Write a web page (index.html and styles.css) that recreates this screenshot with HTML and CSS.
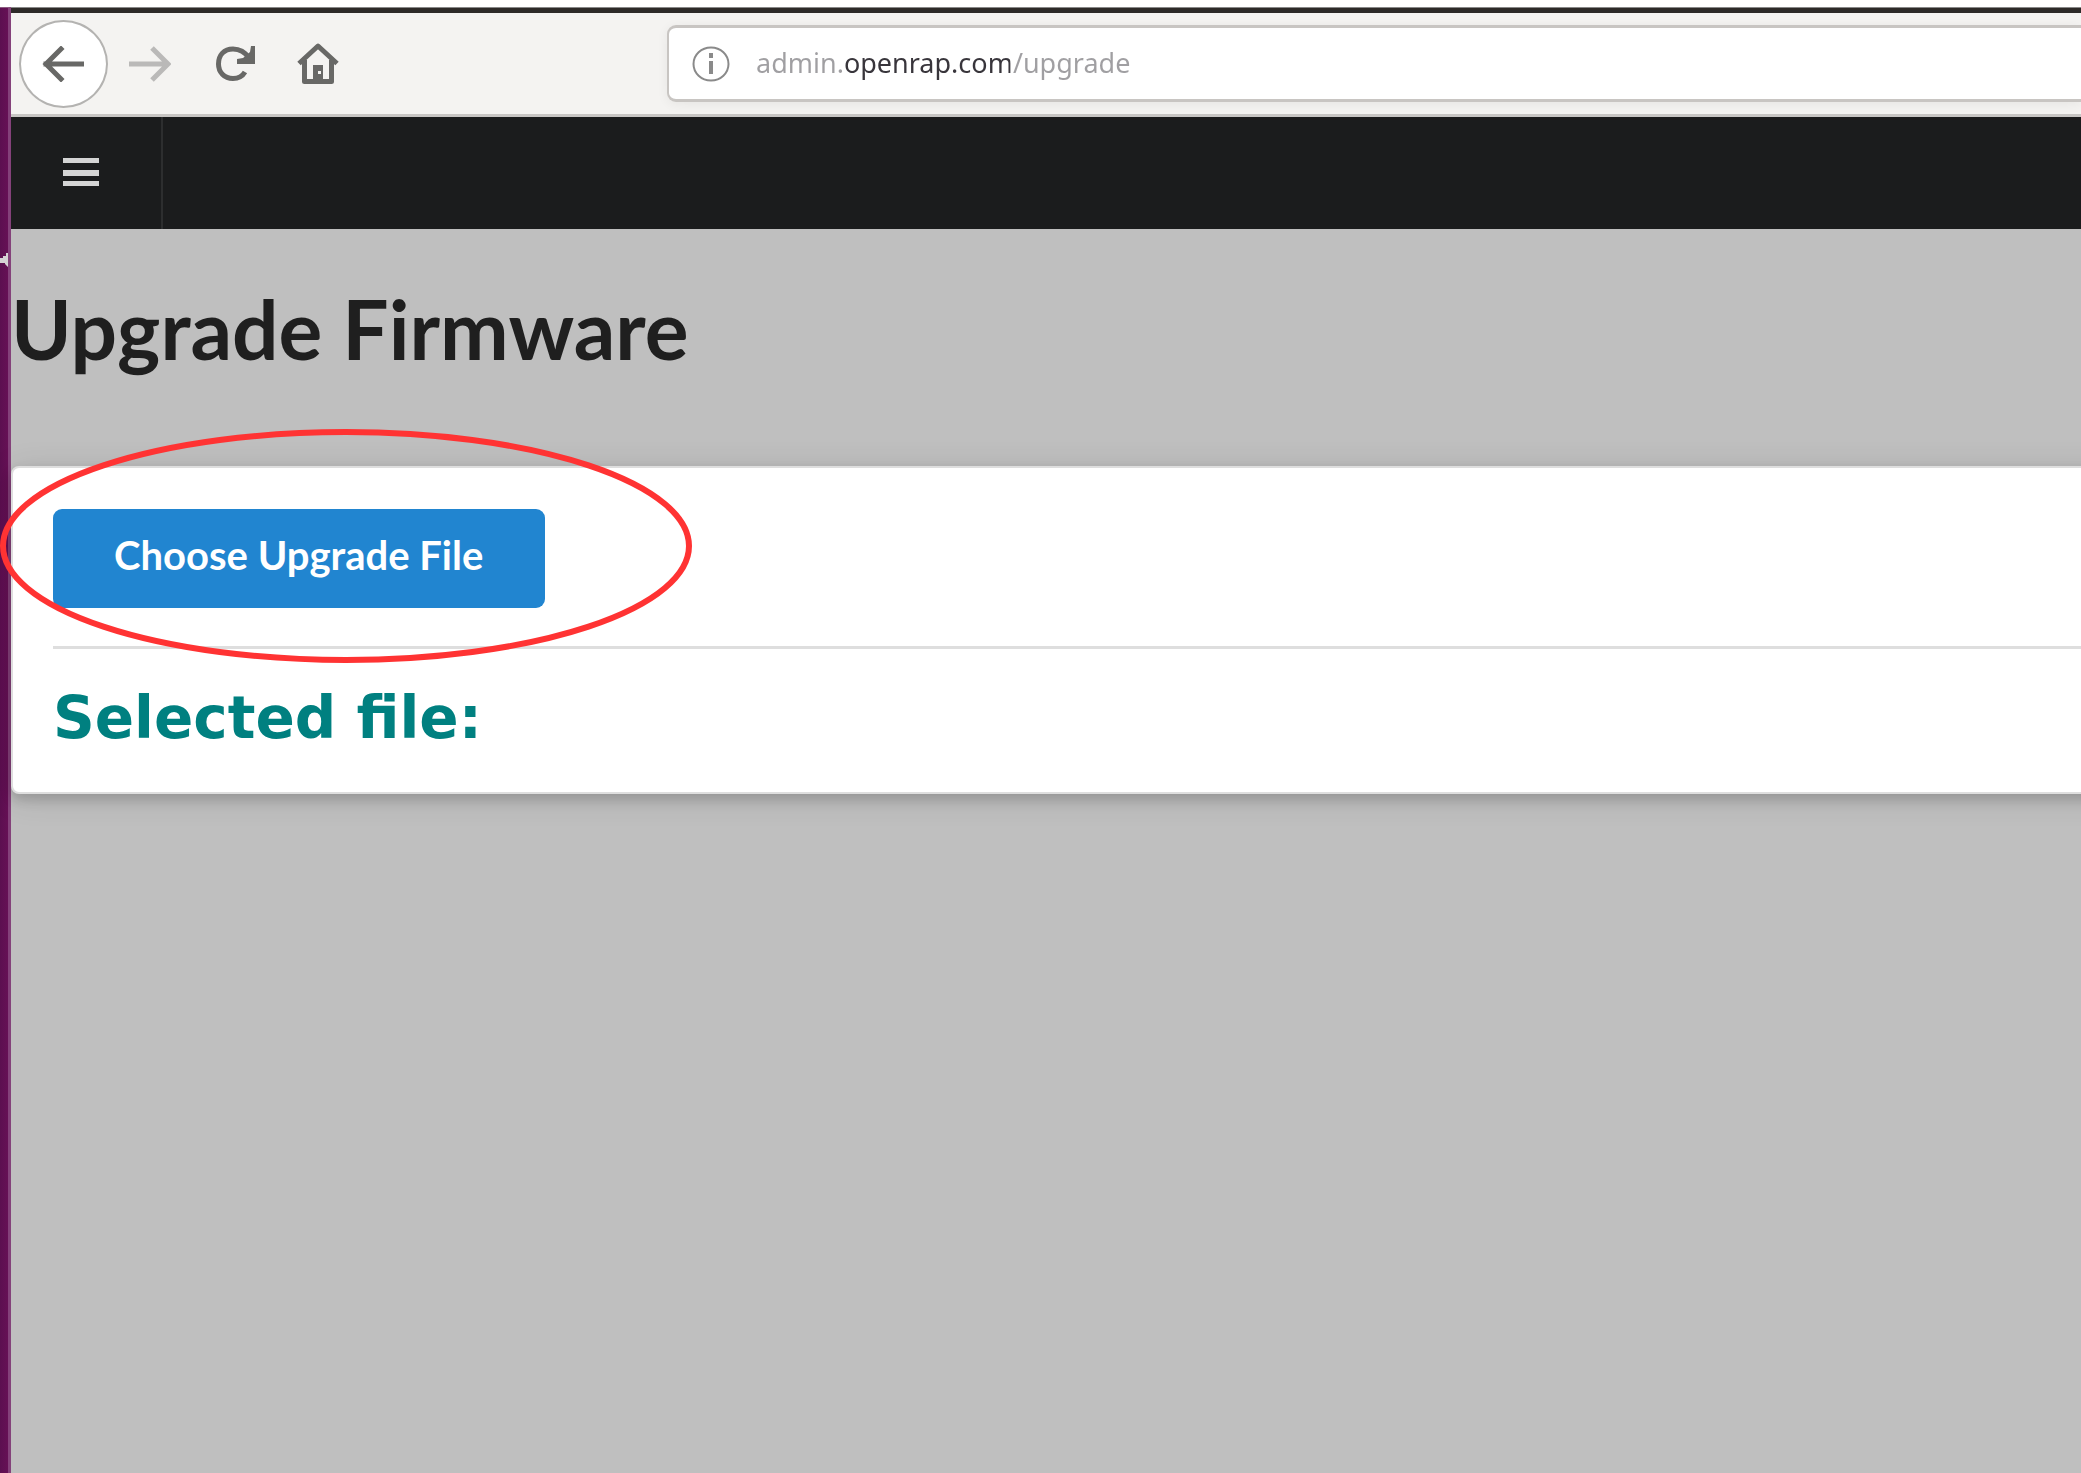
FILE: index.html
```html
<!DOCTYPE html>
<html lang="en">
<head>
<meta charset="utf-8">
<meta name="viewport" content="width=device-width, initial-scale=1">
<title>Upgrade Firmware</title>
<link rel="stylesheet" href="styles.css">
</head>
<body>
<div class="screen">
  <div class="launcher">
    <svg class="launcher-arrow" viewBox="0 0 8 14" aria-hidden="true"><path d="M8 0V14L5 11V10H0V5H3V3H6V0Z"/></svg>
  </div>
  <div class="window">
    <div class="toolbar">
      <div class="tools">
        <button class="tool back" aria-label="Back">
          <svg width="42" height="36" viewBox="0 0 42 36"><path d="M40 18H4M19 3L4 18L19 33" stroke-width="5" stroke-linecap="square"/></svg>
        </button>
        <button class="tool forward" aria-label="Forward" disabled>
          <svg width="42" height="36" viewBox="0 0 42 36"><path d="M0 18H39M23 2L39 18L23 34" stroke-width="5"/></svg>
        </button>
        <button class="tool reload" aria-label="Reload">
          <svg width="40" height="36" viewBox="0 0 40 36"><path d="M29 26C26 31 22 32.500 17 32.500C8 32.500 2.500 26 2.500 18C2.500 9 8 3 17 3C24 3 29 6 33 12" stroke-width="5"/><path class="solid" d="M35 0H39V18H21V13L27 12L34 6Z"/></svg>
        </button>
        <button class="tool home" aria-label="Home">
          <svg width="42" height="42" viewBox="0 0 42 42"><path d="M2 20.500L21 3L40 20.500M7.500 17V38.500H34.500V17" stroke-width="5" stroke-linejoin="round"/><path class="solid" fill-rule="evenodd" d="M16 22H26V39H16ZM21 28V31H24V28Z"/></svg>
        </button>
      </div>
      <div class="address">
        <svg class="info" width="38" height="36" viewBox="0 0 38 36" aria-hidden="true"><ellipse cx="19" cy="18" rx="17.500" ry="16.500" stroke-width="2"/><path class="solid" d="M17 7H21V12H17ZM17 15H21V28H17Z"/></svg>
        <input class="url" type="text" aria-label="Address" value="admin.openrap.com/upgrade" spellcheck="false">
      </div>
    </div>
    <nav class="menu">
      <button class="menu-toggle" aria-label="Menu">
        <svg width="36" height="28" viewBox="0 0 36 28"><path d="M0 0H36V5H0ZM0 12H36V18H0ZM0 23H36V28H0Z"/></svg>
      </button>
    </nav>
    <main class="content">
      <h1 class="title">Upgrade Firmware</h1>
      <section class="card">
        <div class="chooser">
          <button class="choose">Choose Upgrade File</button>
          <svg class="mark" viewBox="0 0 692 236" aria-hidden="true"><ellipse cx="346" cy="118" rx="343" ry="114"/></svg>
        </div>
        <h2 class="selected">Selected file:</h2>
      </section>
    </main>
  </div>
</div>
</body>
</html>
```
FILE: styles.css
```css
* { box-sizing: border-box; }

body {
  margin: 0;
  background: #fff;
  font-family: Lato, sans-serif;
}

button {
  margin: 0;
  padding: 0;
  border: 0;
  background: none;
  font: inherit;
}

svg { display: block; }

.screen {
  display: flex;
  min-height: 100vh;
  padding-top: 7px;
  overflow: hidden;
}

/* Desktop strip beside the browser window */
.launcher {
  flex: none;
  width: 11px;
  padding-top: 245px;
  border-top: 1px solid #8a5a80;
  border-right: 3px solid #84417a;
  background: linear-gradient(90deg, #5c0f50, #661055);
}

.launcher-arrow {
  width: 8px;
  height: 14px;
  fill: #d6d2d5;
}

.window {
  flex: 1;
  min-width: 0;
  display: flex;
  flex-direction: column;
  border-top: 1px solid #888;
}

/* Browser toolbar */
.toolbar {
  display: flex;
  align-items: center;
  height: 109px;
  padding-left: 8px;
  border-top: 5px solid #2d2a28;
  border-bottom: 3px solid #c8c6c4;
  background: #f4f3f1;
}

.tools {
  flex: none;
  display: flex;
  align-items: center;
  width: 648px;
}

.tool {
  display: flex;
  align-items: center;
  justify-content: center;
}

.tool svg {
  fill: none;
  stroke: #686866;
}

.tool .solid,
.info .solid {
  stroke: none;
  fill: #686866;
}

.back {
  width: 89px;
  height: 88px;
  padding-right: 2px;
  border: 2px solid #b4b3b1;
  border-radius: 50%;
  background: #fff;
}

.forward { margin-left: 21px; }
.forward svg { stroke: #bab9b8; }
.reload { margin-left: 45px; }
.home { margin-left: 41px; }

.address {
  flex: 1;
  min-width: 0;
  display: flex;
  align-items: center;
  height: 77px;
  padding-left: 23px;
  border: 3px solid #c8c5c2;
  border-width: 3px 0 3px 2px;
  border-radius: 9px 0 0 9px;
  background: #fff;
  box-shadow: 0 2px 12px rgba(0, 0, 0, 0.06);
}

.info {
  flex: none;
  fill: none;
  stroke: #8a8a8a;
}

.info .solid { fill: #8a8a8a; }

/* The host name is drawn darker than the rest of the address */
.url {
  flex: 1;
  min-width: 0;
  margin-left: 26px;
  padding: 0 0 2px;
  border: 0;
  outline: 0;
  background: linear-gradient(90deg, #a09fa2 86px, #38353b 86px 254px, #a09fa2 254px);
  -webkit-background-clip: text;
  background-clip: text;
  color: transparent;
  font: 27px/40px "Noto Sans", sans-serif;
}

/* Site menu */
.menu {
  display: flex;
  height: 112px;
  background: #1b1c1d;
}

.menu-toggle {
  display: flex;
  justify-content: center;
  width: 152px;
  padding: 41px 10px 0 0;
  border-right: 2px solid #2d2e2f;
}

.menu-toggle svg { fill: #d4d4d4; }

/* Page */
.content {
  flex: 1;
  padding-top: 51px;
  background: #bfbfbf;
}

.title {
  margin: 0;
  color: #1f1f1f;
  font-size: 82px;
  font-weight: 700;
  line-height: 96px;
}

/* The card runs on past the right edge of the window */
.card {
  margin: 90px -40px 0 0;
  padding: 41px 0 41px 40px;
  border: 2px solid #dedede;
  border-radius: 8px;
  background: #fff;
  box-shadow: 0 6px 12px rgba(0, 0, 0, 0.15), 0 4px 32px rgba(0, 0, 0, 0.12);
}

.chooser {
  position: relative;
  padding-bottom: 38px;
  border-bottom: 3px solid #dedede;
}

.choose {
  padding: 22px 62px 29px 61px;
  border-radius: 9px;
  background: #2185d0;
  color: #fff;
  font-size: 40px;
  font-weight: 700;
  line-height: 48px;
}

.mark {
  position: absolute;
  top: -81px;
  left: -53px;
  width: 692px;
  height: 236px;
  fill: none;
  stroke: #f33;
  stroke-width: 6px;
}

.selected {
  margin: 37px 0 1px;
  color: #008080;
  font: 700 58px/64px "DejaVu Sans", sans-serif;
}
```
